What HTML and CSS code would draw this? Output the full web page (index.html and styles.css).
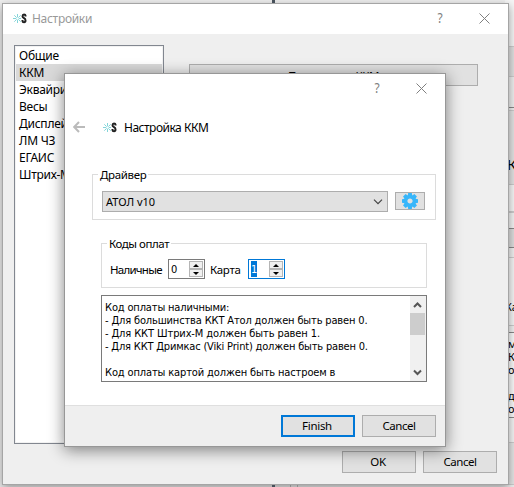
FILE: index.html
```html
<!DOCTYPE html>
<html lang="ru">
<head>
<meta charset="utf-8">
<title>Настройки</title>
<link rel="stylesheet" href="styles.css">
</head>
<body>
<svg class="defs" width="0" height="0" aria-hidden="true">
  <symbol id="logo" viewBox="0 0 14 12">
    <path d="M4.5 1v9M0 5.5h8M1.3 2.3l6.4 6.4M7.7 2.3L1.3 8.7" stroke="#83d5d9" stroke-width="1" fill="none"/>
    <circle cx="4.5" cy="5.5" r="1.3" fill="#fff"/>
    <path d="M12.5 3.6V2.6Q12.4 1.5 11 1.5T9.5 3.2Q9.5 4.4 11 5.2T12.5 7.5Q12.5 9.2 11 9.2T9.5 8V7" stroke="#222" stroke-width="2" fill="none"/>
  </symbol>
  <symbol id="close" viewBox="0 0 11 11"><path d="M.5.5l10 10M10.5.5l-10 10" stroke="#808080" fill="none"/></symbol>
</svg>
<div class="desktop">
  <div class="mark top"></div>
  <div class="mark bottom"></div>
  <div class="pane-edge"></div>
  <aside class="behind">
    <div class="b1"></div><div class="b2"></div><div class="b3"></div><div class="b4"></div>
    <div class="b5"><span>К</span></div><div class="b6"></div><div class="b7"></div><div class="b8"></div>
    <div class="b9"></div><div class="b10"></div><div class="b11"><span>Ка</span></div><div class="b12"></div>
    <div class="b13"><span>м</span><span>К</span><span>о</span><span></span><span>до</span><span>ос</span></div>
    <div class="b14"></div><div class="b15"></div>
  </aside>

  <section class="window settings">
    <header class="titlebar">
      <svg class="logo" width="14" height="12"><use href="#logo"/></svg>
      <span class="title">Настройки</span>
      <span class="help">?</span>
      <svg class="close" width="11" height="11"><use href="#close"/></svg>
    </header>
    <div class="content">
      <ul class="list">
        <li>Общие</li><li class="selected">ККМ</li><li>Эквайринг</li><li>Весы</li>
        <li>Дисплей</li><li>ЛМ ЧЗ</li><li>ЕГАИС</li><li>Штрих-М</li>
      </ul>
      <button class="btn connect">Подключить ККМ</button>
    </div>
    <footer class="actions"><button class="btn">OK</button><button class="btn cancel">Cancel</button></footer>
  </section>

  <section class="window wizard">
    <header class="titlebar">
      <span class="help">?</span>
      <svg class="close" width="11" height="11"><use href="#close"/></svg>
    </header>
    <div class="heading">
      <svg width="13" height="12" viewBox="0 0 13 12"><path d="M1.2 6H12M6 1L1.2 6 6 11" stroke="#bbb" stroke-width="2" fill="none"/></svg>
      <svg class="logo" width="14" height="12"><use href="#logo"/></svg>
      <h1>Настройка ККМ</h1>
    </div>
    <div class="form">
      <fieldset class="group driver">
        <legend>Драйвер</legend>
        <div class="combo"><span>АТОЛ v10</span><svg width="10" height="6" viewBox="0 0 10 6"><path d="M1 .7l4 4 4-4" stroke="#444" stroke-width="1.2" fill="none"/></svg></div>
        <button class="gear"><svg width="16" height="16" viewBox="-8 -8 16 16"><g fill="#37b6fa"><path id="tooth" d="M-1.8-8h3.6l.7 4h-5z"/><use href="#tooth" transform="rotate(45)"/><use href="#tooth" transform="rotate(90)"/><use href="#tooth" transform="rotate(135)"/><use href="#tooth" transform="rotate(180)"/><use href="#tooth" transform="rotate(225)"/><use href="#tooth" transform="rotate(270)"/><use href="#tooth" transform="rotate(315)"/></g><circle r="4.3" fill="#e1e1e1" stroke="#37b6fa" stroke-width="3.4"/></svg></button>
      </fieldset>
      <fieldset class="group codes">
        <legend>Коды оплат</legend>
        <span class="label cash">Наличные</span>
        <div class="spin"><span>0</span><i><b class="up"></b><b class="down"></b></i></div>
        <span class="label card">Карта</span>
        <div class="spin focus"><span><mark>1</mark></span><i><b class="up"></b><b class="down"></b></i></div>
      </fieldset>
      <div class="textbox">
        <div class="text">
          <p class="t1">Код оплаты наличными:</p>
          <p class="t2">- Для большинства ККТ Атол должен быть равен 0.</p>
          <p class="t3">- Для ККТ Штрих-М должен быть равен 1.</p>
          <p class="t4">- Для ККТ Дримкас (Viki Print) должен быть равен 0.</p>
          <p></p>
          <p class="t5">Код оплаты картой должен быть настроем в</p>
        </div>
        <div class="scroll">
          <svg width="15" height="17" viewBox="0 0 15 17"><path d="M4 11l3.5-3.5L11 11" stroke="#555" stroke-width="2" fill="none"/></svg>
          <div class="thumb"></div>
          <svg width="15" height="17" viewBox="0 0 15 17"><path d="M4 6.5L7.5 10 11 6.5" stroke="#555" stroke-width="2" fill="none"/></svg>
        </div>
      </div>
    </div>
    <footer class="actions"><button class="btn primary">Finish</button><button class="btn cancel">Cancel</button></footer>
  </section>
</div>
</body>
</html>
```
FILE: styles.css
```css
* { box-sizing: border-box; }
body { margin: 0; font: 12px "Noto Sans", sans-serif; color: #000; overflow: hidden; }
.defs { position: absolute; }
.desktop { position: relative; width: 514px; height: 487px; background: #efefef; overflow: hidden; }
.mark { position: absolute; left: 272px; width: 3px; height: 3px; background: #46505a; z-index: 2; }
.mark.top { top: 0; }
.mark.bottom { top: 485px; }
.pane-edge { position: absolute; left: 290px; top: 484px; width: 8px; height: 3px; border: solid #bbb; border-width: 0 1px; }

.behind { position: absolute; left: 505px; top: 0; width: 9px; height: 487px; display: flex; flex-direction: column; }
.behind div { flex: none; border-bottom: 1px solid #ccc; overflow: hidden; white-space: nowrap; }
.b1 { height: 47px; background: #f6f6f6; }
.b2 { height: 30px; background: #e0e0e0; }
.b3 { height: 31px; background: #eee; }
.behind .b3, .behind .b8, .behind .b9, .behind .b12, .behind .b13 { border-color: #888; }
.b4 { height: 3px; background: #eee; }
.b5 { height: 74px; background: #e3e3e3; padding-top: 43px; font-size: 15px; line-height: 20px; }
.b5 span { margin-left: 2px; }
.b6 { height: 27px; background: #f6f6f6; }
.b7 { height: 1px; }
.b8 { height: 16px; background: #f3f3f3; }
.b9 { height: 19px; background: #ddd; }
.b10 { height: 10px; background: #f0f0f0; }
.b11 { height: 68px; background: #f5f5f5; padding-top: 41px; font-size: 11px; line-height: 16px; }
.b12 { height: 7px; background: #f0f0f0; }
.b13 { height: 85px; background: #fafafa; padding-top: 4px; font-size: 11px; line-height: 13px; }
.b13 span { display: block; height: 13px; margin-left: 3px; }
.b14 { height: 25px; background: #f4f4f4; }
.b15 { height: 42px; background: #e5e5e5; }

.window { position: absolute; display: flex; flex-direction: column; background: #efefef; border: 1px solid #a5a5a5; }
.settings { left: 2px; top: 3px; width: 507px; height: 482px; box-shadow: 0 3px 9px rgba(0,0,0,.38); z-index: 1; }
.wizard { left: 64px; top: 73px; width: 382px; height: 374px; border-color: #979797; box-shadow: 0 3px 15px rgba(0,0,0,.48); z-index: 2; }
.titlebar { display: flex; align-items: center; flex: none; height: 30px; background: #fff; padding: 0 18px 2px 10px; }
.titlebar .logo { margin-top: 2px; }
.title { font-size: 12px; color: #999; margin: 1px 0 0 5px; letter-spacing: -.3px; }
.help { margin-left: auto; margin-right: 36px; font-size: 14px; line-height: 16px; color: #808080; transform: scaleX(.85); }
.wizard .help { margin-top: -2px; }
.logo { flex: none; }
.content { display: flex; align-items: flex-start; flex: none; height: 417px; padding: 11px 0 0 11px; }
.list { margin: 0; padding: 1px 1px; width: 150px; height: 399px; list-style: none; background: #fff; border: 1px solid #828790; box-shadow: inset 0 0 0 1px #f2f2f2; }
.list li { height: 17px; line-height: 17px; padding-left: 3px; font-size: 12px; letter-spacing: -.25px; white-space: nowrap; }
.list .selected { background: #d9d9d9; }
.btn { display: block; flex: none; height: 22px; width: 74px; padding: 0; border: 1px solid #adadad; background: #e1e1e1; color: #000; font: 11.5px/18px "Noto Sans", sans-serif; letter-spacing: -.3px; }
.btn.cancel { letter-spacing: -.5px; }
.connect { width: 289px; height: 22px; margin: 19px 0 0 25px; padding-top: 2px; letter-spacing: -.45px; }
.actions { display: flex; justify-content: flex-end; gap: 7px; }
.settings .actions { padding-right: 11px; }
.settings .actions .btn { line-height: 20px; padding-bottom: 1px; }
.settings .actions .btn:first-child { padding-right: 2px; }
.wizard .titlebar { padding-bottom: 1px; }
.heading { display: flex; align-items: center; background: #fff; flex: none; height: 49px; padding: 0 0 4px 8px; }
.heading .logo { margin: 2px 0 0 17px; }
.heading h1 { margin: 2px 0 0 7px; font-size: 12px; font-weight: 400; letter-spacing: -.5px; }
.form { background: #fff; flex: none; height: 253px; padding-top: 9px; border-bottom: 1px solid #dfdfdf; }
.group { margin: 0; padding: 0; border: 1px solid #dcdcdc; white-space: nowrap; min-width: 0; display: flex; }
.group, .textbox { font-family: "DejaVu Sans Condensed", "DejaVu Sans", sans-serif; font-size: 11px; }
.group legend { padding: 0 2px; margin-left: -4px; height: 13px; line-height: 13px; font-family: "Noto Sans", sans-serif; font-size: 11.5px; letter-spacing: -.35px; }
.driver { width: 344px; height: 52px; margin: 6px 0 0 27px; padding: 10px 0 0 9px; }
.combo { display: flex; align-items: center; justify-content: space-between; width: 286px; height: 21px; border: 1px solid #adadad; background: #e1e1e1; padding: 0 4px 0 3px; font-family: "Noto Sans", sans-serif; }
.gear { display: flex; align-items: center; justify-content: center; width: 30px; height: 18px; margin: 1px 0 0 7px; padding: 0; border: 1px solid #adadad; background: #e1e1e1; }
.codes { width: 326px; height: 51px; margin: 17px 0 0 36px; padding: 9px 0 0 8px; }
.codes legend { margin-left: -3px; letter-spacing: -.45px; }
.label { line-height: 22px; font-family: "Noto Sans", sans-serif; letter-spacing: -.3px; font-size: 11.5px; }
.cash { width: 58px; letter-spacing: -.75px; }
.card { margin-left: 5px; width: 38px; }
.spin { display: flex; justify-content: space-between; width: 37px; height: 20px; border: 1px solid #7a7a7a; background: #fff; padding: 1px 1px 1px 2px; line-height: 18px; }
.spin.focus { border-color: #0078d7; }
.spin mark { display: block; width: 6px; height: 16px; line-height: 17px; background: #0078d7; color: #fff; }
.spin i { display: flex; flex-direction: column; width: 14px; }
.spin b { display: flex; align-items: center; justify-content: center; height: 8px; border: 1px solid #b5b5b5; background: #f0f0f0; }
.spin b::before { content: ""; border: solid transparent; border-width: 0 3px; }
.spin .up::before { border-bottom: 3px solid #000; }
.spin .down::before { border-top: 3px solid #000; }
.textbox { display: flex; width: 326px; height: 87px; margin: 7px 0 0 36px; border: 1px solid #7a7a7a; background: #fff; overflow: hidden; }
.text { flex: 1; padding: 5px 0 0 3px; white-space: nowrap; }
.text p { margin: 0; height: 13px; line-height: 13px; }
.t1, .t2 { letter-spacing: -.15px; }
.t3 { letter-spacing: -.11px; }
.t4 { letter-spacing: -.18px; }
.t5 { letter-spacing: -.13px; }
.scroll { width: 16px; background: #f0f0f0; display: flex; flex-direction: column; }
.scroll svg { display: block; flex: none; }
.scroll svg:last-child { margin-top: auto; }
.thumb { height: 22px; width: 15px; background: #cdcdcd; }
.wizard .actions { padding: 9px 9px 0 0; }
.primary { border: 2px solid #0078d7; line-height: 16px; padding: 0 2px 1px 0; }
```
